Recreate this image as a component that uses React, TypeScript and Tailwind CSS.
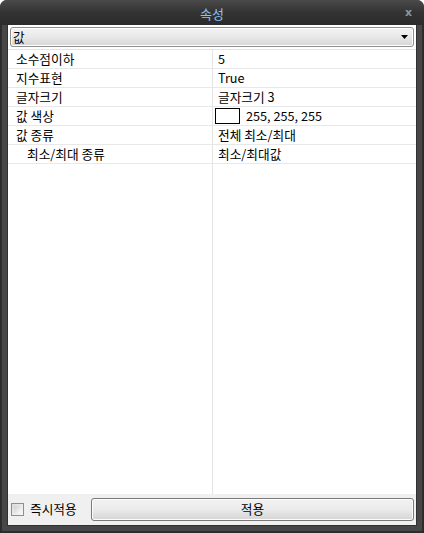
import React from "react";

const font = { fontFamily: '"Noto Sans CJK KR", "Noto Sans", sans-serif' };

type Row = { label: string; value: React.ReactNode; indent?: boolean };

export default function App() {
  const rows: Row[] = [
    { label: "소수점이하", value: "5" },
    { label: "지수표현", value: "True" },
    { label: "글자크기", value: "글자크기 3" },
    {
      label: "값 색상",
      value: (
        <span className="flex items-center">
          <span className="inline-block w-[25px] h-[16px] border border-black bg-white -ml-[3px] mr-[6px]" />
          255, 255, 255
        </span>
      ),
    },
    { label: "값 종류", value: "전체 최소/최대" },
    { label: "최소/최대 종류", value: "최소/최대값", indent: true },
  ];

  return (
    <div className="w-[424px] h-[533px] bg-white text-[12.7px] text-black" style={font}>
      <div className="w-full h-full rounded-t-[7px] bg-[#2c2c2c] p-[2px] pt-0 flex flex-col">
        {/* title bar */}
        <div className="h-[25px] -mx-[2px] rounded-t-[7px] bg-gradient-to-b from-[#4a4a4a] via-[#333333] to-[#2b2b2b] flex items-center relative shrink-0">
          <div className="flex-1 text-center text-[13px] text-[#8cc2f4] leading-none pt-[1px]">속성</div>
          <div className="absolute right-[12px] top-[7px] text-[11px] font-bold text-[#8a96a4] leading-none" style={{ fontFamily: '"DejaVu Sans", sans-serif' }}>
            x
          </div>
        </div>
        {/* frame body */}
        <div className="flex-1 bg-[#474747] px-[5px] pb-[5px] flex flex-col min-h-0">
          <div className="flex-1 border border-[#303030] border-t-0 bg-[#f0f0f0] flex flex-col min-h-0">
            {/* combo */}
            <div className="px-[2px] pt-[2px] pb-[2px] bg-white">
              <div className="h-[20px] rounded-[3px] border border-[#8e8e8e] bg-gradient-to-b from-[#f4f4f4] via-[#e8e8e8] to-[#d6d6d6] flex items-center pl-[2px] pr-[5px] shadow-[inset_0_0_0_1px_#ffffff]">
                <span className="flex-1 leading-none">값</span>
                <svg width="7" height="4" viewBox="0 0 7 4">
                  <path d="M0 0 H7 L3.5 4 Z" fill="#000" />
                </svg>
              </div>
            </div>
            {/* grid */}
            <div className="flex-1 bg-white relative min-h-0 border-t border-[#e4e4e4]">
              <div className="absolute top-0 bottom-0 left-[204px] w-px bg-[#e4e4e4]" />
              {rows.map((r, i) => (
                <div key={i} className="h-[19px] flex border-b border-[#e8e8e8] relative">
                  <div className={`w-[204px] flex items-center leading-none ${r.indent ? "pl-[19px]" : "pl-[8px]"}`}>
                    {r.label}
                  </div>
                  <div className="flex-1 flex items-center pl-[6px] leading-none">{r.value}</div>
                </div>
              ))}
            </div>
            {/* bottom bar */}
            <div className="h-[31px] bg-[#f0f0f0] flex items-center pl-[3px] pr-[2px] shrink-0">
              <div className="w-[13px] h-[13px] border border-[#8f8f8f] bg-gradient-to-br from-[#dcdcdc] to-[#f8f8f8] p-[2px] mr-[6px]">
                <div className="w-full h-full bg-gradient-to-br from-[#d0d0d0] to-[#fafafa]" />
              </div>
              <span className="leading-none w-[61px]">즉시적용</span>
              <button className="flex-1 h-[23px] rounded-[3px] border border-[#7a7a7a] bg-gradient-to-b from-[#f2f2f2] via-[#ebebeb] to-[#d4d4d4] shadow-[inset_0_0_0_1px_#fcfcfc] leading-none text-[12.7px]" style={font}>
                적용
              </button>
            </div>
          </div>
        </div>
      </div>
    </div>
  );
}
